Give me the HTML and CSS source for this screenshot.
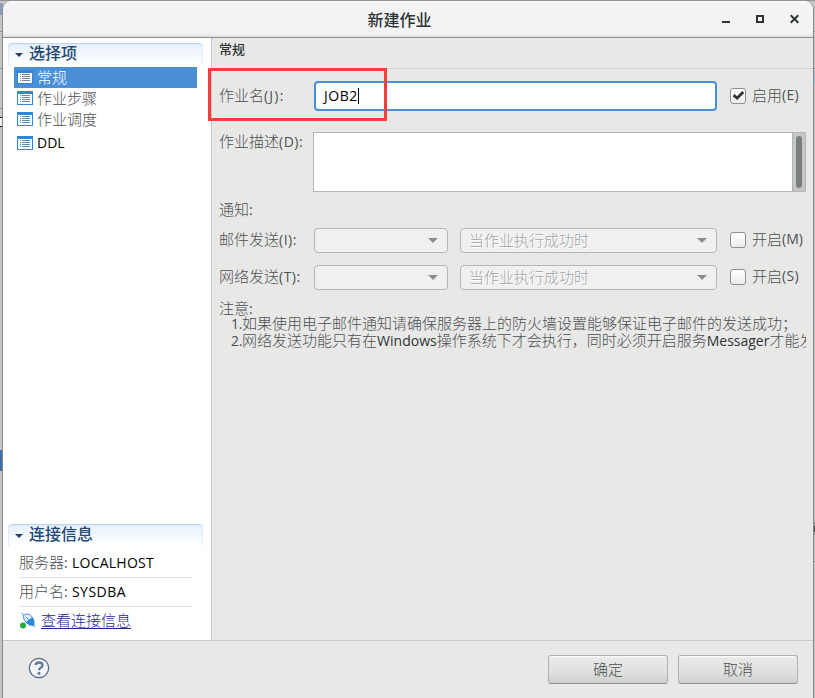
FILE: index.html
```html
<!DOCTYPE html>
<html lang="zh-CN">
<head>
<meta charset="utf-8">
<title>新建作业</title>
<link rel="stylesheet" href="styles.css">
</head>
<body>
<svg class="defs" width="0" height="0" aria-hidden="true">
  <symbol id="list" viewBox="0 0 16 14">
    <path fill="#2f86d6" d="M0 0h16v14H0z"/><path fill="#fff" d="M1 3h14v10H1z"/>
    <path fill="#6f8799" d="M3 4h1v1H3zM5 4h8v1H5zM3 6h1v1H3zM5 6h8v1H5zM3 8h1v1H3zM5 8h8v1H5zM3 10h1v1H3zM5 10h8v1H5z"/>
  </symbol>
</svg>
<div class="backdrop" aria-hidden="true">
  <i class="strip top"></i><i class="strip left-a"></i><i class="strip left-b"></i><i class="strip left-c"></i><i class="strip left-d"></i><i class="strip left-e"></i><i class="strip left-f"></i>
  <i class="strip right-a"></i><i class="strip right-b"></i><i class="strip right-c"></i><i class="strip right-d"></i><i class="strip right-e"></i>
</div>
<div class="window">
  <header class="titlebar">
    <h1>新建作业</h1>
    <div class="controls">
      <svg width="8" height="12"><path fill="#2e3436" d="M0 8h8v2H0z"/></svg>
      <svg width="8" height="12"><path fill="none" stroke="#2e3436" stroke-width="2" d="M1 3h6v6H1z"/></svg>
      <svg width="9" height="12"><path fill="none" stroke="#2e3436" stroke-width="2" d="M.7 2.2l7.6 7.6M8.3 2.2L.7 9.8"/></svg>
    </div>
  </header>
  <div class="body">
    <aside class="sidebar">
      <section>
        <h2 class="section"><svg width="8" height="4"><path fill="#1f4068" d="M0 0h8L4 4z"/></svg>选择项</h2>
        <ul class="nav">
          <li class="active"><svg class="ico"><use href="#list"/></svg>常规</li>
          <li><svg class="ico"><use href="#list"/></svg>作业步骤</li>
          <li><svg class="ico"><use href="#list"/></svg>作业调度</li>
          <li class="ddl"><svg class="ico"><use href="#list"/></svg><span class="en">DDL</span></li>
        </ul>
      </section>
      <section class="connection">
        <h2 class="section"><svg width="8" height="4"><path fill="#1f4068" d="M0 0h8L4 4z"/></svg>连接信息</h2>
        <p class="info">服务器<span class="en">: <b>LOCALHOST</b></span></p>
        <p class="info">用户名<span class="en">: <b class="user">SYSDBA</b></span></p>
        <p class="view">
          <svg width="16" height="17" viewBox="0 0 16 17">
            <path d="M1.500 1l3 3M11.500 11l3.500 4" stroke="#4b91cc" stroke-width="1"/>
            <path d="M3.500 3.500Q6 1 9.500 2.500L12.500 6L6 10.500Q3 7 3.500 3.500z" fill="#e8f3fc" stroke="#3c8fd8"/>
            <path d="M12.500 5L5.500 10.500L9.500 13.500L14 14Q15.500 9 12.500 5z" fill="#2e87dc"/>
            <path d="M6 5l5 5" stroke="#3c8fd8"/>
            <circle cx="3" cy="13.500" r="3" fill="#1faf3d"/>
          </svg>
          <a>查看连接信息</a>
        </p>
      </section>
    </aside>
    <main class="main">
      <h2 class="pagehead">常规</h2>
      <form class="form">
        <div class="row name">
          <label class="lbl">作业名<span class="en">(J):</span></label>
          <div class="input"><span class="en">JOB2</span><i class="caret"></i></div>
          <div class="check"><svg class="box" width="16" height="16" viewBox="0 0 16 16"><path fill="none" stroke="#2e3436" stroke-width="3.200" d="M3 7l4 3.500L14 3.500"/></svg>启用<span class="en">(E)</span></div>
          <i class="highlight"></i>
        </div>
        <div class="row desc">
          <label class="lbl">作业描述<span class="en">(D):</span></label>
          <div class="textarea"><div class="track"><i class="thumb"></i></div></div>
        </div>
        <div class="notify">通知<span class="en">:</span></div>
        <div class="row send">
          <label class="lbl">邮件发送<span class="en">(I):</span></label>
          <div class="select small"><i class="arrow"></i></div>
          <div class="select wide">当作业执行成功时<i class="arrow"></i></div>
          <div class="check"><i class="box"></i>开启<span class="en tight">(M)</span></div>
        </div>
        <div class="row send">
          <label class="lbl">网络发送<span class="en">(T):</span></label>
          <div class="select small"><i class="arrow"></i></div>
          <div class="select wide">当作业执行成功时<i class="arrow"></i></div>
          <div class="check"><i class="box"></i>开启<span class="en">(S)</span></div>
        </div>
        <div class="notes">
          <div>注意<span class="en">:</span></div>
          <p><span class="en tight">1.</span>如果使用电子邮件通知请确保服务器上的防火墙设置能够保证电子邮件的发送成功；</p>
          <p><span class="en tight">2.</span>网络发送功能只有在<span class="en dark">Windows</span>操作系统下才会执行，同时必须开启服务<span class="en dark">Messager</span>才能发</p>
        </div>
      </form>
    </main>
  </div>
  <footer class="footer">
    <svg width="22" height="22" viewBox="0 0 22 22"><circle cx="11" cy="11" r="9.700" fill="#f3f4f5" stroke="#526a8c" stroke-width="1.200"/><path d="M7.500 8Q8 5.500 11 5.500Q14.500 5.500 14.500 8.300Q14.500 9.700 12.700 10.800Q11 11.700 11 13.300" fill="none" stroke="#60789b" stroke-width="2.300"/><circle cx="11" cy="16.300" r="1.500" fill="#60789b"/></svg>
    <div class="buttons"><div class="btn">确定</div><div class="btn">取消</div></div>
  </footer>
</div>
</body>
</html>
```
FILE: styles.css
```css
* { box-sizing: border-box; margin: 0; padding: 0; }
body {
  width: 815px; height: 698px; overflow: hidden; position: relative;
  background: #c5c5c5; color: #4c5052;
  font: 300 15px/20px "Noto Sans CJK SC", sans-serif;
}
i, b { font-style: normal; font-weight: 400; }
ul { list-style: none; }
svg { display: block; flex: none; }
.defs { position: absolute; }
.en { font-family: "Open Sans", "Noto Sans", sans-serif; font-size: 14px; font-weight: 400; line-height: 1; letter-spacing: .3px; }
.strip { position: absolute; left: 0; width: 3px; height: 1px; background: #8f8f8f; }
.top { width: 815px; top: 0; background: #929292; }
.left-a { top: 3px; height: 12px; background: #8aa0b8; }
.left-b { top: 31px; } .left-c { top: 68px; }
.left-d { top: 117px; height: 10px; border: solid #111; border-width: 1px 0; background: #eee; }
.left-e { top: 450px; height: 21px; background: #3d6da6; }
.left-f { top: 108px; }
.right-a, .right-b, .right-c, .right-d, .right-e { left: 812px; }
.right-a { top: 31px; } .right-b { top: 68px; }
.right-c { top: 71px; height: 13px; background: #a4b9d4; }
.right-d { top: 522px; height: 13px; border: solid #999; border-width: 4px 0 3px; background: #444b4b; }
.right-e { top: 561px; }
.window {
  position: relative; width: 812px; height: 697px; margin: 1px 0 0 2px;
  display: flex; flex-direction: column; overflow: hidden;
  background: #e8e8e7; border: solid #8a8a88; border-width: 0 1px; border-radius: 9px 9px 0 0;
}
.titlebar {
  height: 37px; flex: none; display: flex; align-items: center; position: relative;
  background: linear-gradient(#fff 0, #f4f4f4 2px, #f2f2f2 33px, #deded9 36px); border-bottom: 1px solid #8b8e89;
}
h1 { width: 793px; text-align: center; font-size: 16px; font-weight: 500; color: #2e3436; line-height: 24px; }
.controls { position: absolute; right: 14px; top: 12px; display: flex; gap: 26px; }
.body { height: 602px; display: flex; flex: none; }
.sidebar {
  width: 209px; flex: none; background: #fff; border-right: 1px solid #c9c9c7;
  padding: 5px 8px 0 5px; display: flex; flex-direction: column; justify-content: space-between;
}
.section {
  height: 22px; display: flex; align-items: center; gap: 6px; padding: 0 0 4px 7px;
  font-size: 16px; font-weight: 500; color: #244a74; line-height: 17px;
  border-top: 1px solid #bdd7f2; border-radius: 4px 4px 0 0;
  background: linear-gradient(#e7f0fb, #fff);
  box-shadow: inset 1px 1px #dceafa, inset -1px 0 #e3effb;
}
.section svg { margin-top: 4px; }
.nav { margin: 2px 6px 0 6px; }
.nav li { height: 21px; display: flex; align-items: center; gap: 4px; padding: 0 0 1px 3px; line-height: 18px; }
.nav .active { color: #fff; background: #4a90d9; }
.nav .ddl { height: 26px; padding-bottom: 0; color: #000; }
.ddl .en { letter-spacing: 0; }
.ico { width: 16px; height: 14px; }
.connection { height: 116px; }
.info { height: 29px; margin: 0 11px; padding-top: 3px; border-bottom: 1px solid #e2e2e2; line-height: 20px; }
.section + .info { height: 32px; padding-top: 6px; }
.info b { color: #000; letter-spacing: .25px; }
.info .user { letter-spacing: .5px; }
.view { display: flex; align-items: center; gap: 5px; padding: 3px 0 0 12px; }
.view a { color: #25259a; text-decoration: underline; text-underline-offset: 2px; }
.main { width: 601px; }
.pagehead { height: 31px; padding: 1px 7px; font-size: 13px; font-weight: 500; line-height: 20px; color: #2e3436; border-bottom: 1px solid #d0d0ce; }
.form { display: block; padding-left: 7px; }
.row { display: flex; align-items: center; position: relative; }
.lbl { width: 95px; flex: none; white-space: nowrap; padding-bottom: 2px; }
.lbl .en { letter-spacing: .5px; }
.name { height: 30px; margin-top: 12px; }
.name .lbl .en { letter-spacing: 1.2px; }
.input { width: 403px; height: 30px; display: flex; align-items: center; padding-left: 8px; border: 2px solid #4a90d9; border-radius: 4px; background: #fff; color: #000; }
.input .en { letter-spacing: .5px; }
.caret { width: 1px; height: 16px; background: #000; }
.check { display: flex; align-items: center; margin-left: 13px; padding-bottom: 2px; white-space: nowrap; }
.box { width: 16px; height: 16px; margin: 2px 6px 0 0; border: 1px solid #8e918e; border-radius: 3px; background: linear-gradient(#fff, #ececec); overflow: visible; }
.send .check, .send .lbl { padding-bottom: 3px; }
.highlight { position: absolute; left: -11px; top: -13px; width: 179px; height: 53px; border: 3px solid #fa3c3c; }
.desc { height: 60px; margin-top: 21px; align-items: flex-start; }
.desc .lbl { width: 94px; margin-top: -1px; }
.textarea { width: 493px; height: 60px; border: 1px solid #b6b6b3; background: #fff; display: flex; justify-content: flex-end; }
.track { width: 13px; background: #c5c7c6; border-left: 1px solid #b2b3b1; padding: 3px; }
.thumb { display: block; width: 6px; height: 52px; border-radius: 3px; background: #7b7e7e; }
.notify { height: 20px; margin-top: 7px; }
.send { height: 25px; margin-top: 9px; }
.send + .send { margin-top: 12px; }
.select { position: relative; height: 25px; border: 1px solid #b6b6b3; border-radius: 4px; background: #f0f0f0; color: #a1a5a6; line-height: 22px; padding-left: 8px; text-shadow: 1px 1px #fff; }
.small { width: 134px; margin-right: 12px; }
.wide { width: 257px; }
.arrow { position: absolute; right: 9px; top: 9px; border: solid transparent; border-width: 5px 5px 0; border-top-color: #8b8e8f; }
.notes { margin-top: 5px; padding: 4px 0; white-space: nowrap; width: 587px; overflow: hidden; line-height: 17px; }
.notes p { padding-left: 12px; height: 17px; }
.notes div { height: 15px; }
.notes .en, .tight { letter-spacing: 0; }
.notes .en.tight { letter-spacing: -.3px; }
.dark { color: #2e3436; }
.footer { flex: 1; border-top: 1px solid #c9c9c7; display: flex; align-items: flex-start; justify-content: space-between; padding: 14px 15px 0 25px; }
.footer svg { margin-top: 2px; }
.buttons { display: flex; gap: 10px; }
.btn { width: 120px; height: 29px; line-height: 26px; text-align: center; border: 1px solid #b0b1ae; border-bottom-color: #8d8e8b; border-radius: 3px; background: linear-gradient(#fff 0, #e9e9e8 2px, #e0e0df 60%, #cfcfcd); }
```
